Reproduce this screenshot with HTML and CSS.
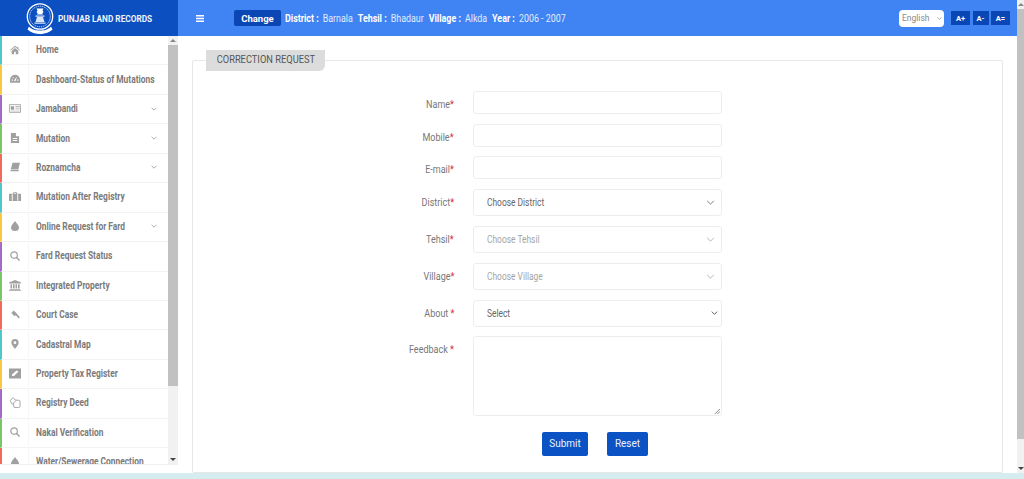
FILE: index.html
```html
<!DOCTYPE html>
<html lang="en">
<head>
<meta charset="utf-8">
<title>Punjab Land Records</title>
<link rel="stylesheet" href="styles.css">
</head>
<body>
<svg class="defs" aria-hidden="true">
  <symbol id="chev" viewBox="0 0 10 6"><path d="M1 1l4 4 4-4" fill="none" stroke="currentColor" stroke-width="1.2"/></symbol>
</svg>
<div class="app">
  <div class="upper">
    <div class="main-col">
      <header class="topbar">
        <div class="brand">
          <svg class="emblem" viewBox="0 0 28 32">
            <circle cx="14" cy="14" r="12.7" fill="none" stroke="#fff" stroke-width="1.3"/>
            <circle cx="14" cy="14" r="10.300" fill="none" stroke="#dfe8f8" stroke-width=".9" stroke-dasharray="1.200 .8"/>
            <path d="M10.500 6h7l-1 2 1 1.500-1.200 1.200.7 1.300h-6l.7-1.300L10.500 9.500l1-1.500z" fill="#fff"/>
            <path d="M9.500 13h9v1.200h-9zM11 14.600h6l1.500 5h-9zM8.500 20h11v1.200h-11z" fill="#fff" opacity=".85"/>
            <path d="M3 24c3 3.500 7 4 11 4s8-.5 11-4l1.500 3c-3 3-8.500 4.500-12.500 4.500S4.500 30 1.500 27z" fill="#fff"/>
          </svg>
          <span class="brand-name">PUNJAB LAND RECORDS</span>
        </div>
        <div class="bar">
          <svg class="burger" viewBox="0 0 8 7"><path d="M0 0h8v1.500H0zM0 2.750h8v1.500H0zM0 5.500h8V7H0z" fill="#fff"/></svg>
          <button class="change">Change</button>
          <div class="crumbs">
            <b>District :</b><span>Barnala</span>
            <b>Tehsil :</b><span>Bhadaur</span>
            <b>Village :</b><span>Alkda</span>
            <b>Year :</b><span>2006 - 2007</span>
          </div>
          <div class="tools">
            <div class="lang">English<svg class="lang-chev"><use href="#chev"/></svg></div>
            <div class="sizes"><button>A+</button><button class="narrow">A-</button><button>A=</button></div>
          </div>
        </div>
      </header>
      <div class="body-row">
        <aside class="sidebar">
          <nav class="menu">
            <a class="item c1"><span class="ico"><svg viewBox="0 0 12 10"><path d="M6 0L0 5l.7.7L6 1.400l5.300 4.300.7-.7-2-1.700V1H8.800v1.300zM2 6v4h3V7h2v3h3V6L6 2.600z" fill="currentColor"/></svg></span><span class="lbl">Home</span></a>
            <a class="item c2"><span class="ico"><svg viewBox="0 0 12 10"><path d="M6 0a6 6 0 0 0-6 6v3.500h12V6a6 6 0 0 0-6-6zM2 5.500h1.500V7H2zM8.500 5.500H10V7H8.500zM3.300 2.700l1 .1v1.300h-1zM5.200 7.500a1.100 1.100 0 0 1 .3-1.500l2-3.200.6.300-1.200 3.500a1.100 1.100 0 0 1-1.700.9z" fill="currentColor" fill-rule="evenodd"/></svg></span><span class="lbl">Dashboard-Status of Mutations</span></a>
            <a class="item c3"><span class="ico wide"><svg viewBox="0 0 14 10"><path d="M.5.500h13v9H.5z" fill="none" stroke="currentColor"/><path d="M2 2.500h4v4H2zM7.500 2.500h5v1h-5zM7.500 5h5v1h-5zM2 7.500h10.500v.8H2z" fill="currentColor"/></svg></span><span class="lbl">Jamabandi</span><svg class="chev"><use href="#chev"/></svg></a>
            <a class="item c4"><span class="ico"><svg viewBox="0 0 9 11"><path d="M0 0h5.500L9 3.500V11H0zM5.500 0v3.500H9L5.500 0zM2 5.500h5v1H2zM2 7.800h5v1H2z" fill="currentColor" fill-rule="evenodd"/></svg></span><span class="lbl">Mutation</span><svg class="chev"><use href="#chev"/></svg></a>
            <a class="item c5"><span class="ico"><svg viewBox="0 0 12 10"><path d="M3 0h9L10 7.500H1zM1 8h9.500l-.2 2H.500z" fill="currentColor"/></svg></span><span class="lbl">Roznamcha</span><svg class="chev"><use href="#chev"/></svg></a>
            <a class="item c6"><span class="ico wide"><svg viewBox="0 0 13 10"><path d="M4.500 2V.500h4V2H13v8H0V2zM5.500 1.300V2h2v-.7zM3 2.500v7h1v-7zM9 2.500v7h1v-7z" fill="currentColor" fill-rule="evenodd"/></svg></span><span class="lbl">Mutation After Registry</span></a>
            <a class="item c1b"><span class="ico"><svg viewBox="0 0 8 10"><path d="M4 0c1 2 4 4 4 6.500a4 3.500 0 0 1-8 0C0 4 3 2 4 0z" fill="currentColor"/></svg></span><span class="lbl">Online Request for Fard</span><svg class="chev"><use href="#chev"/></svg></a>
            <a class="item c3"><span class="ico"><svg viewBox="0 0 11 11"><circle cx="4.500" cy="4.500" r="3.600" fill="none" stroke="currentColor" stroke-width="1.300"/><path d="M7.200 7.200L10.500 10.500" stroke="currentColor" stroke-width="1.600"/></svg></span><span class="lbl">Fard Request Status</span></a>
            <a class="item c4"><span class="ico wide"><svg viewBox="0 0 12 11"><path d="M6 0l6 2.500v1H0v-1zM1.500 4.200h1.600v4.300H1.500zM4 4.200h1.600v4.300H4zM6.500 4.200h1.600v4.300H6.500zM9 4.200h1.600v4.300H9zM.7 9h10.600v.8H.7zM0 10.200h12v.8H0z" fill="currentColor"/></svg></span><span class="lbl">Integrated Property</span></a>
            <a class="item c5"><span class="ico"><svg viewBox="0 0 12 11"><path d="M4.500 0l4 4-3 3-4-4zM5.800 4.200l1.400-1.400 4.600 5.400-1.500 1.500z" fill="currentColor"/></svg></span><span class="lbl">Court Case</span></a>
            <a class="item c6"><span class="ico"><svg viewBox="0 0 8 11"><path d="M4 0a4 4 0 0 0-4 4c0 2.500 3 5.500 4 7 1-1.500 4-4.500 4-7a4 4 0 0 0-4-4zm0 2.500a1.500 1.500 0 1 1 0 3 1.500 1.500 0 0 1 0-3z" fill="currentColor" fill-rule="evenodd"/></svg></span><span class="lbl">Cadastral Map</span></a>
            <a class="item c1b"><span class="ico wide"><svg viewBox="0 0 12 10"><path d="M0 0h12v10H0zM3 7.500h2l4.500-4.500-2-1L3 6z" fill="currentColor" fill-rule="evenodd"/></svg></span><span class="lbl">Property Tax Register</span></a>
            <a class="item c3"><span class="ico wide"><svg viewBox="0 0 12 12"><rect x="4.500" y="3.500" width="7" height="8" rx="1.500" fill="none" stroke="currentColor"/><path d="M4 .700L.700 4 3 8l4-4z" fill="#fff" stroke="currentColor"/></svg></span><span class="lbl">Registry Deed</span></a>
            <a class="item c4"><span class="ico"><svg viewBox="0 0 11 11"><circle cx="4.500" cy="4.500" r="3.600" fill="none" stroke="currentColor" stroke-width="1.300"/><path d="M7.200 7.200L10.500 10.500" stroke="currentColor" stroke-width="1.600"/></svg></span><span class="lbl">Nakal Verification</span></a>
            <a class="item c5"><span class="ico"><svg viewBox="0 0 8 10"><path d="M4 0c1 2 4 4 4 6.500a4 3.500 0 0 1-8 0C0 4 3 2 4 0z" fill="currentColor"/></svg></span><span class="lbl">Water/Sewerage Connection</span></a>
          </nav>
          <div class="side-scroll">
            <i class="arrow up"></i>
            <div class="side-thumb"></div>
            <i class="arrow down"></i>
          </div>
        </aside>
        <main class="content">
          <section class="card">
            <h2 class="legend"><span>CORRECTION REQUEST</span></h2>
            <form class="form">
              <label class="name"><span>Name<em>*</em></span></label><input class="ctl">
              <label class="name"><span>Mobile<em>*</em></span></label><input class="ctl">
              <label class="name"><span>E-mail<em>*</em></span></label><input class="ctl">
              <label class="name tall"><span>District<em>*</em></span></label><div class="ctl sel"><span>Choose District</span><svg class="sel-chev"><use href="#chev"/></svg></div>
              <label class="name tall"><span>Tehsil<em>*</em></span></label><div class="ctl sel off"><span>Choose Tehsil</span><svg class="sel-chev"><use href="#chev"/></svg></div>
              <label class="name tall"><span>Village<em>*</em></span></label><div class="ctl sel off"><span>Choose Village</span><svg class="sel-chev"><use href="#chev"/></svg></div>
              <label class="name tall"><span>About <em>*</em></span></label><div class="ctl sel last"><span>Select</span><svg class="sel-chev dark"><use href="#chev"/></svg></div>
              <label class="name area-lbl"><span>Feedback <em>*</em></span></label><div class="ctl area"><svg class="grip" viewBox="0 0 7 7"><path d="M1 7l6-6M4 7l3-3" stroke="#666" stroke-width=".9"/></svg></div>
              <div class="actions"><button type="button" class="btn submit">Submit</button><button type="button" class="btn reset">Reset</button></div>
            </form>
          </section>
        </main>
      </div>
    </div>
    <div class="page-scroll">
      <i class="arrow up"></i>
      <div class="page-thumb"></div>
      <i class="arrow down"></i>
    </div>
  </div>
  <footer class="strip"></footer>
</div>
</body>
</html>
```
FILE: styles.css
```css
* { box-sizing: border-box; }
html, body { margin: 0; height: 479px; overflow: hidden; }
body { font-family: Roboto, "Liberation Sans", sans-serif; background: #fff; color: #666; font-size: 10px; }
.defs { display: none; }
.app { display: flex; flex-direction: column; height: 479px; }
.upper { flex: 1; display: flex; min-height: 0; }
.main-col { flex: 1; display: flex; flex-direction: column; min-width: 0; }
.topbar { display: flex; height: 36px; flex: none; }
.brand { width: 178px; background: #0b4fc1; display: flex; align-items: center; padding-left: 26px; gap: 4px; }
.emblem { width: 28px; height: 33px; flex: none; }
.brand-name { color: #eef3fb; font-weight: 700; font-size: 9.500px; white-space: nowrap; transform: scaleX(.87); transform-origin: left center; }
.bar { flex: 1; background: #4083f3; display: flex; align-items: center; padding-left: 18px; color: #fff; }
.burger { width: 8px; height: 7px; flex: none; margin-right: 30px; }
.change { width: 47px; height: 16px; border: 0; padding: 0; border-radius: 2px; background: #0b47b4; color: #fff; font: 700 9.500px Roboto, sans-serif; }
.crumbs { display: flex; align-items: center; margin-left: 4px; gap: 4.500px; font-size: 10px; white-space: nowrap; transform: scaleX(.89); transform-origin: left center; }
.crumbs b { font-weight: 700; color: #fff; }
.crumbs span { color: #e2ecfc; margin-right: 1px; }
.tools { margin-left: auto; display: flex; align-items: center; padding-right: 7px; gap: 7px; }
.lang { width: 45px; height: 17px; background: #fff; border-radius: 4px; color: #8a8a8a; font-size: 8.500px; display: flex; align-items: center; padding-left: 3px; }
.lang-chev { width: 5px; height: 3px; margin-left: 7px; color: #777; }
.sizes { display: flex; gap: 2.500px; }
.sizes button { width: 19px; height: 14px; border: 0; padding: 0; background: #0b47b4; color: #fff; font: 700 7.500px Roboto, sans-serif; }
.sizes .narrow { width: 16px; }
.body-row { flex: 1; display: flex; min-height: 0; }
.sidebar { width: 178px; height: 429px; flex: none; display: flex; border-bottom: 1px solid #efefef; }
.menu { flex: 1; overflow: hidden; min-width: 0; }
.item { display: flex; align-items: center; height: 29.450px; padding-bottom: 1px; border-left: 2px solid; border-bottom: 1px solid #f3f3f3; color: #7a7a7a; font-weight: 700; }
.c1, .c6 { border-left-color: #4dc6cc; }
.c2, .c1b { border-left-color: #fbc740; }
.c3 { border-left-color: #a56ac6; }
.c4 { border-left-color: #7cc566; }
.c5 { border-left-color: #f5695d; }
.ico { width: 27px; height: 100%; flex: none; display: flex; align-items: center; justify-content: center; border-right: 1px solid #f7f7f7; color: #a0a0a0; padding-right: 1px; }
.ico svg { width: 10px; height: 10px; }
.ico.wide svg { width: 12px; height: 11px; }
.lbl { margin-left: 7px; white-space: nowrap; flex: 1; min-width: 0; transform: scaleX(.84); transform-origin: left center; }
.chev { width: 6px; height: 4px; margin-right: 11px; color: #8a8a8a; flex: none; }
.side-scroll { width: 10px; flex: none; background: #f1f1f1; display: flex; flex-direction: column; align-items: center; }
.side-thumb { width: 100%; height: 341px; background: #c1c1c1; margin-top: 3px; }
.arrow { display: block; width: 0; height: 0; border-left: 3px solid transparent; border-right: 3px solid transparent; flex: none; }
.arrow.up { border-bottom: 3px solid #888; margin-top: 3px; }
.arrow.down { border-top: 3px solid #444; margin-top: auto; margin-bottom: 3px; }
.content { flex: 1; min-width: 0; padding: 24px 14px 0 14px; }
.card { border: 1px solid #e7e7e7; height: 413px; border-radius: 2px; padding: 0 13px; }
.legend { width: 119px; height: 21px; margin: -11px 0 0; background: #dcdcdc; border-radius: 0 0 6px 0; color: #555; font-weight: 400; font-size: 10px; line-height: 20px; text-align: center; }
.legend span { display: inline-block; transform: scaleX(.93); }
.form { display: grid; grid-template-columns: 248px 249px; column-gap: 19px; margin-top: 20px; align-items: start; }
.name { text-align: right; line-height: 23px; padding-top: 2px; color: #777; font-size: 10px; }
.name span { display: inline-block; transform: scaleX(.9); transform-origin: right center; }
.name em { color: #d8303a; font-style: normal; }
.tall { line-height: 27px; padding-top: 0; }
.area-lbl { padding-top: 2px; }
.ctl { display: block; width: 249px; height: 23px; border: 1px solid #ededed; border-radius: 3px; margin: 0 0 9.500px; background: #fff; padding: 0; }
.sel { height: 27px; margin-bottom: 10px; display: flex; align-items: center; padding: 0 6px 0 12.500px; color: #666; }
.sel.last { margin-bottom: 9px; }
.sel span { display: inline-block; transform: scaleX(.84); transform-origin: left center; white-space: nowrap; }
.off { color: #a5a5a5; }
.sel-chev { width: 9px; height: 5px; margin-left: auto; color: #808080; flex: none; }
.off .sel-chev { color: #b5b5b5; }
.sel-chev.dark { width: 7px; height: 4px; margin-right: -3px; color: #333; }
.area { height: 80px; margin-bottom: 16px; display: flex; align-items: flex-end; justify-content: flex-end; padding: 0 1px 1px 0; }
.grip { width: 6px; height: 6px; }
.actions { grid-column: 1 / -1; display: flex; gap: 19px; padding-left: 336px; }
.btn { height: 24px; padding: 0; border: 0; border-radius: 2px; background: #0b53c4; color: #eaf1fc; font: 400 10px Roboto, sans-serif; }
.submit { width: 46px; }
.reset { width: 41px; }
.strip { height: 6px; flex: none; background: #d5ecf0; }
.page-scroll { width: 7px; flex: none; background: #f1f1f1; display: flex; flex-direction: column; align-items: center; }
.page-thumb { width: 100%; height: 430px; background: #c1c1c1; margin-top: 3px; }
```
